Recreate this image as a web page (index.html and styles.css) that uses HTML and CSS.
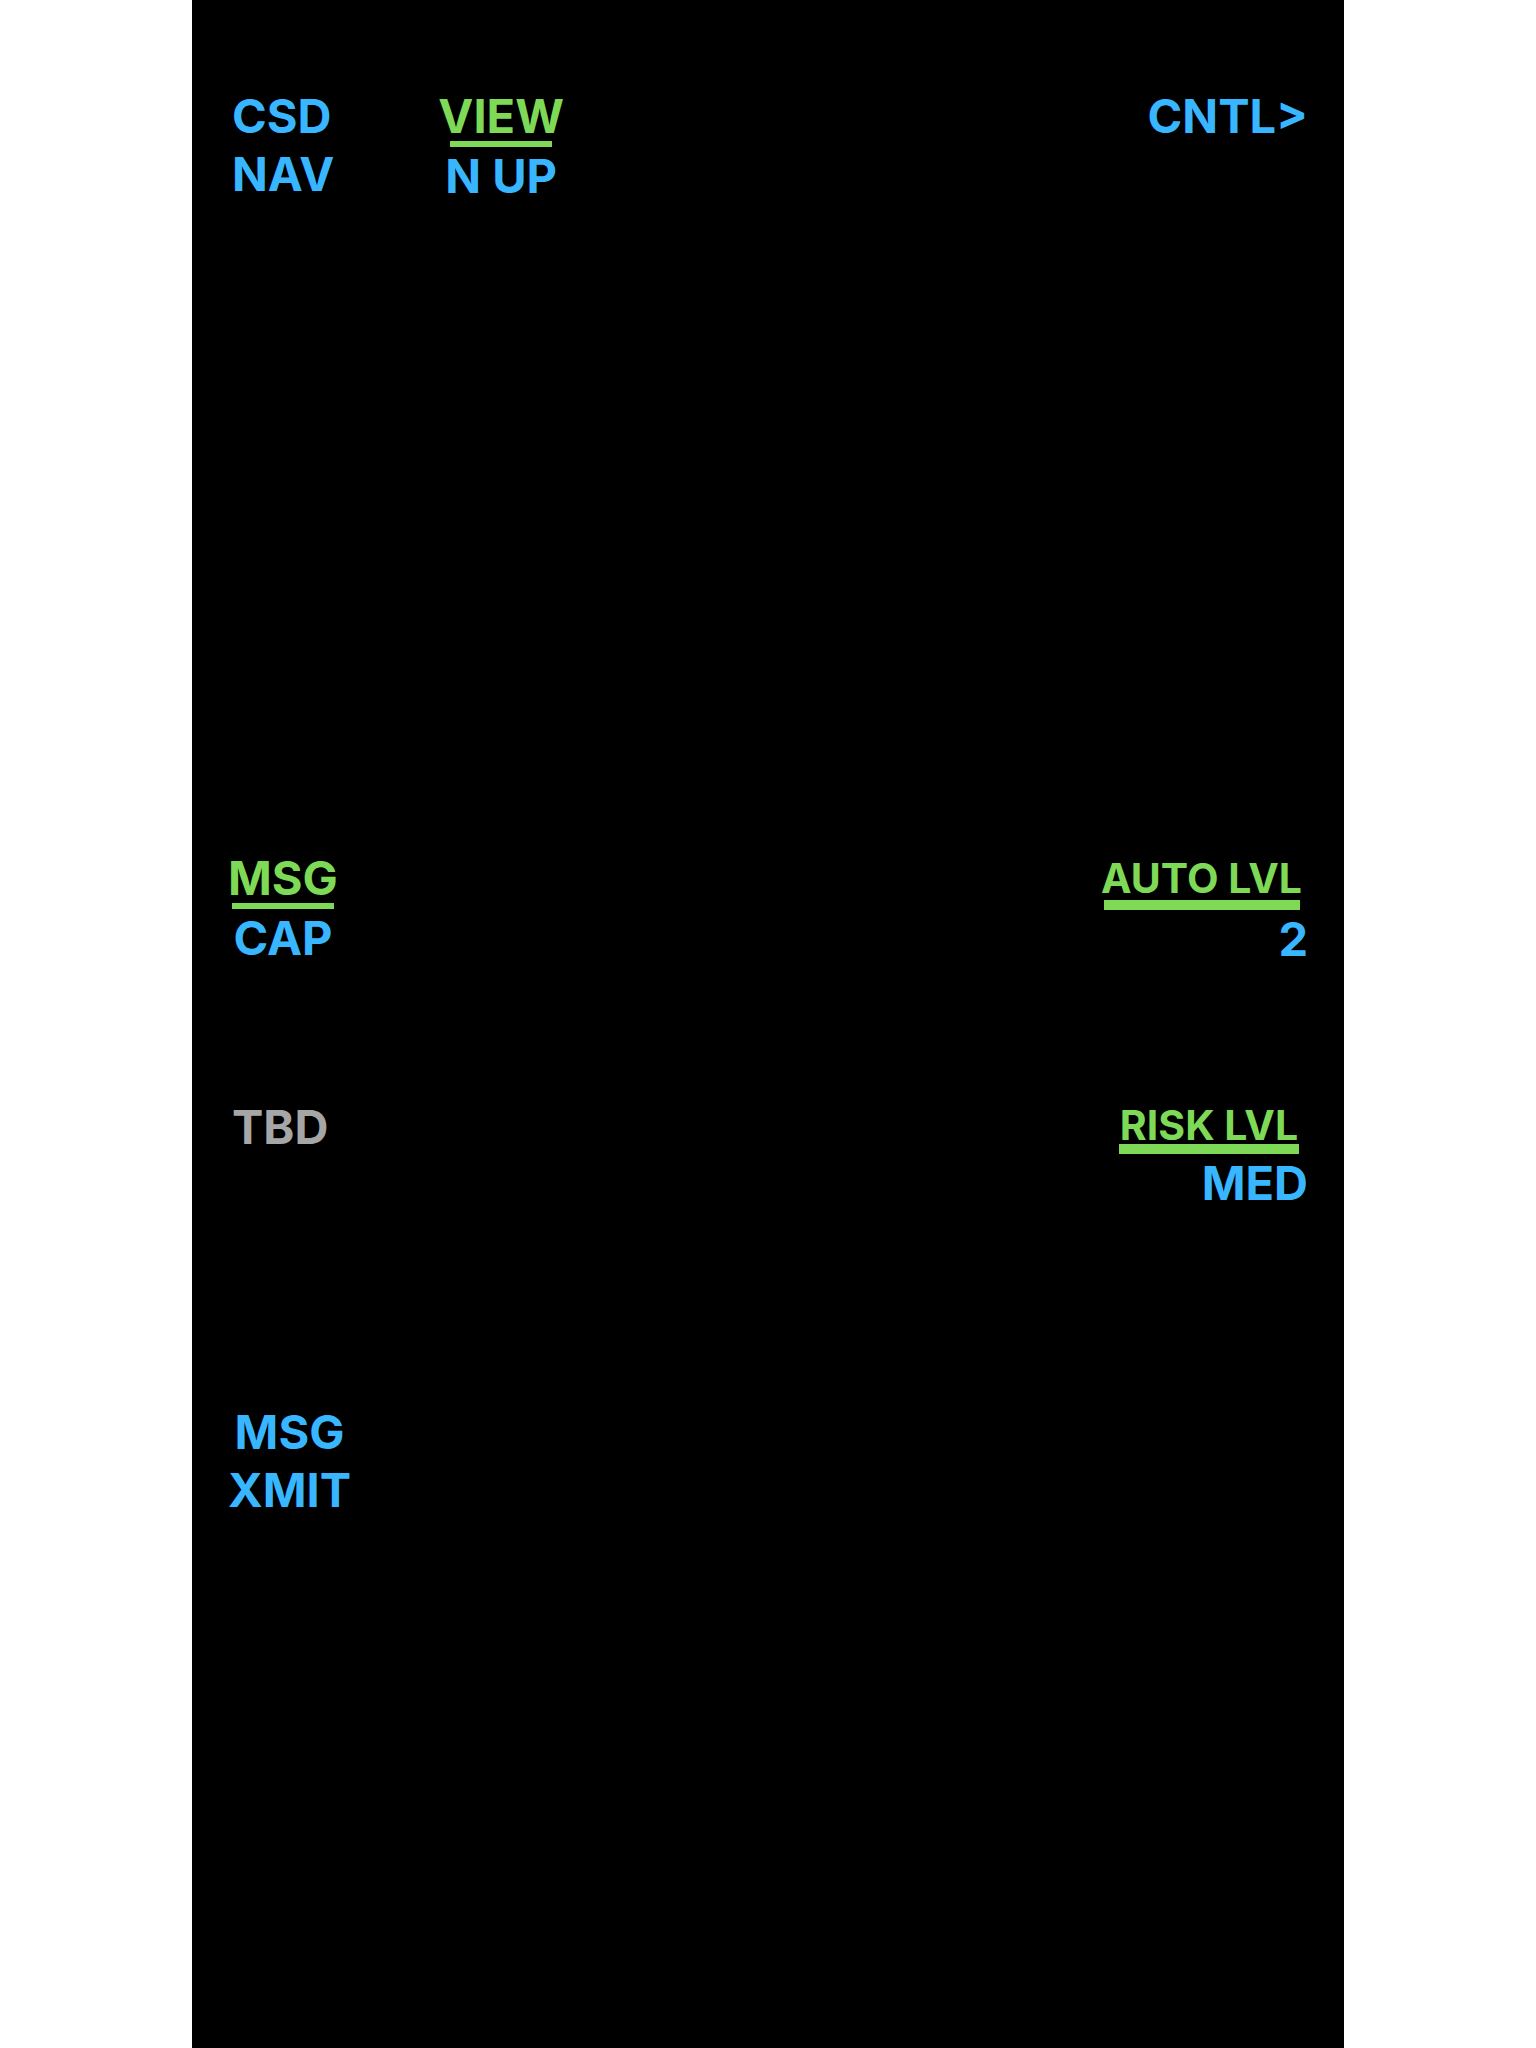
FILE: index.html
```html
<!DOCTYPE html>
<html lang="en">
<head>
<meta charset="utf-8">
<title>CSD NAV</title>
<link rel="stylesheet" href="styles.css">
</head>
<body>
<main class="display">
  <div class="row">
    <div class="side">
      <button class="key key-first" type="button"><span>CSD</span><span>NAV</span></button>
      <button class="key" type="button"><span class="heading">VIEW</span><span class="value">N UP</span></button>
    </div>
    <button class="key right" type="button"><span>CNTL&gt;</span></button>
  </div>
  <div class="row">
    <button class="key" type="button"><span class="heading">MSG</span><span class="value">CAP</span></button>
    <button class="key right" type="button"><span class="heading small auto">AUTO LVL</span><span class="value">2</span></button>
  </div>
  <div class="row">
    <button class="key muted" type="button" disabled><span>TBD</span></button>
    <button class="key right" type="button"><span class="heading small risk">RISK LVL</span><span class="value">MED</span></button>
  </div>
  <div class="row">
    <button class="key" type="button"><span>MSG</span><span>XMIT</span></button>
  </div>
</main>
</body>
</html>
```
FILE: styles.css
```css
* {
  box-sizing: border-box;
}

body {
  margin: 0;
  background: #fff;
  font-family: Inter, "Liberation Sans", sans-serif;
}

.display {
  display: grid;
  grid-template-rows: 762fr 249fr 305fr 641fr;
  width: 75%;
  min-height: 100vh;
  margin: 0 auto;
  padding: 91px 36px 0;
  background: #000;
}

.row,
.side {
  display: flex;
  justify-content: space-between;
  align-items: flex-start;
}

.side {
  gap: 104px;
}

.key {
  display: flex;
  flex-direction: column;
  align-items: center;
  padding: 0;
  border: 0;
  background: none;
  color: #38b6ff;
  font: inherit;
  font-size: 47px;
  font-weight: 700;
  line-height: 50px;
  white-space: nowrap;
  cursor: pointer;
}

.key span + span {
  margin-top: 8px;
}

.key-first,
.muted {
  align-items: flex-start;
  padding-left: 4px;
}

.right {
  align-items: flex-end;
}

.muted {
  color: #a6a6a6;
  cursor: default;
}

/* Green caption with its bar */
.heading {
  display: flex;
  flex-direction: column;
  align-items: center;
  color: #7ed957;
}

.heading::after {
  content: "";
  width: 102px;
  height: 6px;
  background: #7ed957;
}

.key .heading + .value {
  margin-top: 4px;
}

.small {
  margin-right: 6px;
  padding-top: 4px;
  font-size: 41px;
  line-height: 43px;
}

.small::after {
  height: 10px;
}

.auto::after {
  width: 196px;
}

.risk {
  margin-right: 9px;
  line-height: 38px;
}

.risk::after {
  width: 180px;
}
```
